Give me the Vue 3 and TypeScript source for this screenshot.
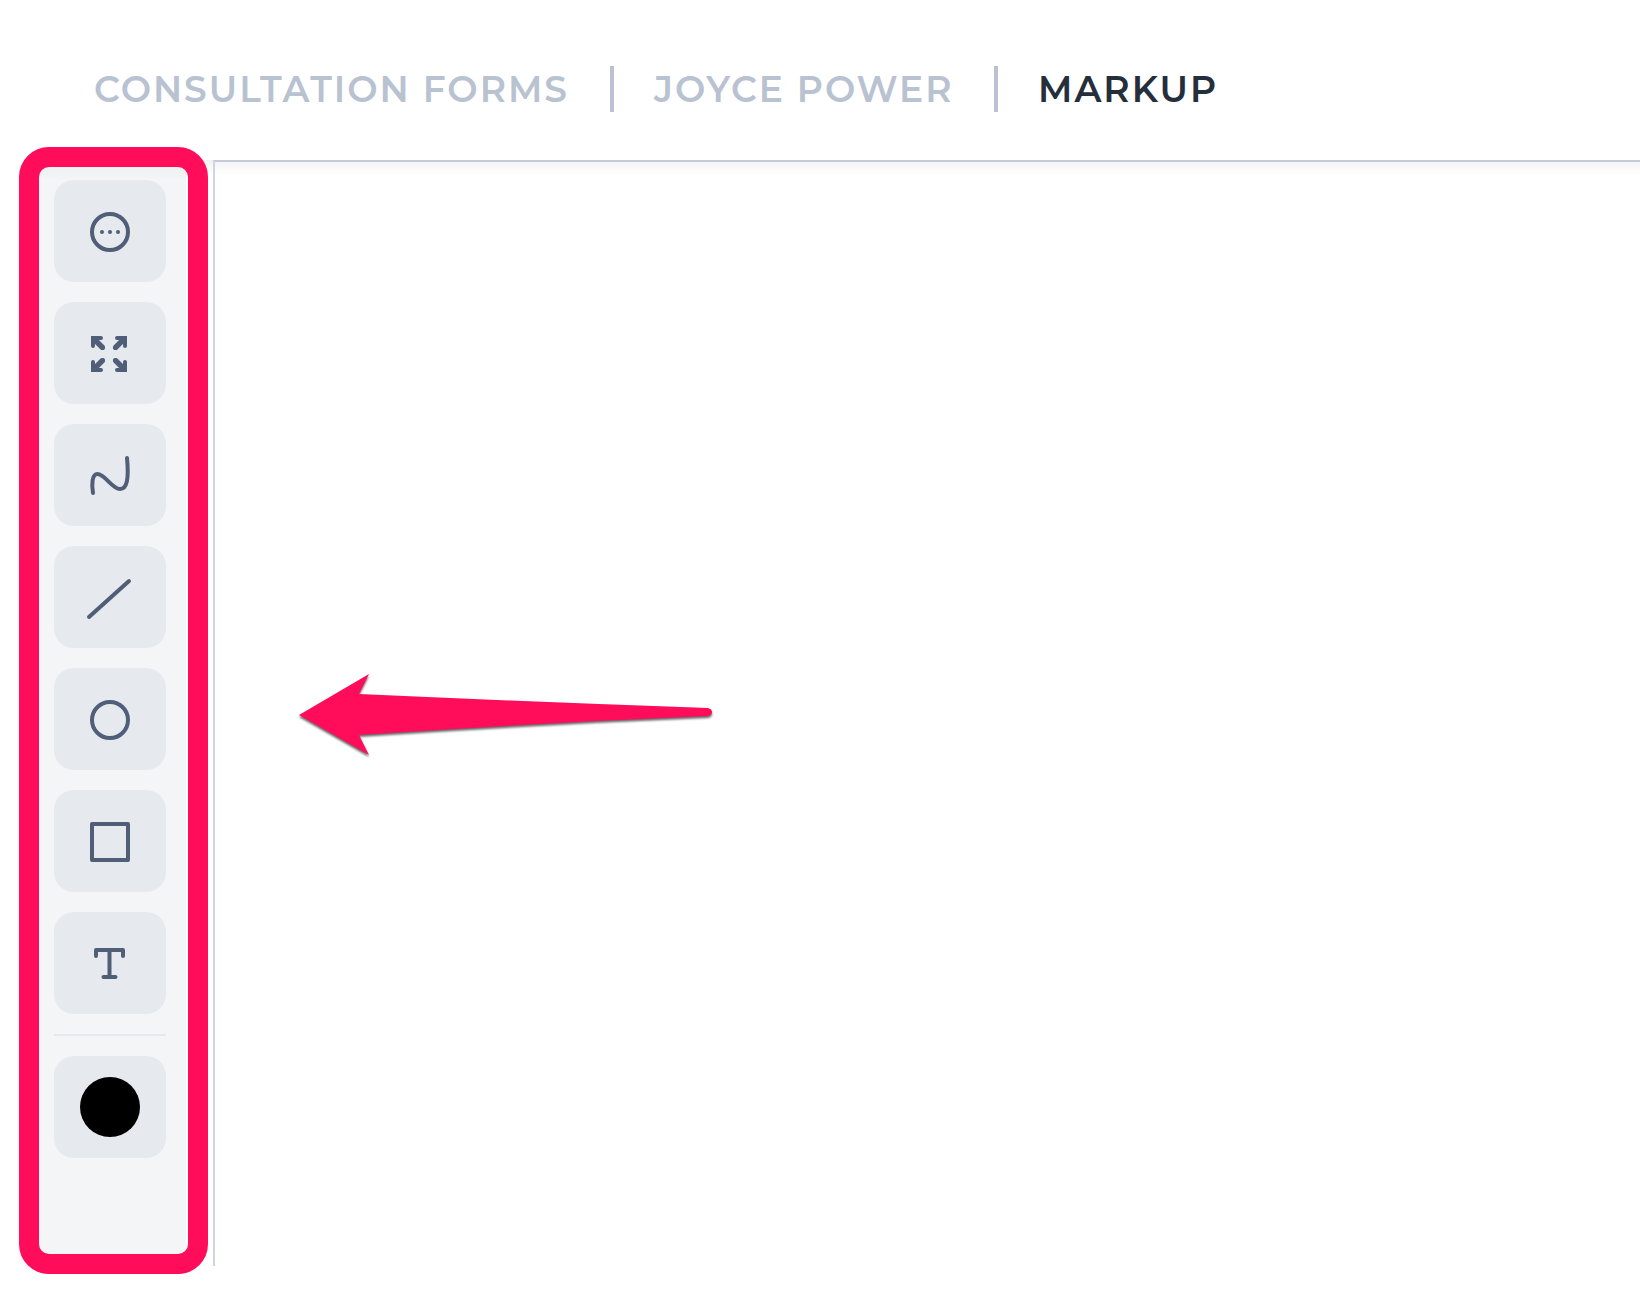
<script setup lang="ts">
import { ref } from 'vue'

interface Tool {
  id: string
  label: string
  strokes: string[]
}

const crumbs: string[] = ['CONSULTATION FORMS', 'JOYCE POWER']

const tools: Tool[] = [
  {
    id: 'more',
    label: 'More options',
    strokes: ['M42 25a18 18 0 1 1-36 0a18 18 0 1 1 36 0z', 'M16 25h0M24 25h0M32 25h0'],
  },
  {
    id: 'expand',
    label: 'Fit to screen',
    strokes: [
      'M15 9H7V17M31 9H39V17M15 41H7V33M31 41H39V33',
      'M8 10L17 19M38 10L29 19M8 40L17 31M38 40L29 31',
      'M9 10L17 18M8 11L16 19M37 10L29 18M38 11L30 19M9 40L17 32M8 39L16 31M37 40L29 32M38 39L30 31',
    ],
  },
  { id: 'draw', label: 'Freehand', strokes: ['M7 42C5.5 33 6 23 11.5 23C19 23 26 38 34 38C41 38 43 28 41 7'] },
  { id: 'line', label: 'Line', strokes: ['M3 44L43 8'] },
  { id: 'circle', label: 'Circle', strokes: ['M42 25a18 18 0 1 1-36 0a18 18 0 1 1 36 0z'] },
  { id: 'square', label: 'Rectangle', strokes: ['M6 7H42V43H6z'] },
  { id: 'text', label: 'Text', strokes: ['M10 17V11H37V17M23.5 11V38M17.5 38H29.5'] },
]

const active = ref<string>('')
</script>

<template>
  <div class="page">
    <nav class="crumbs" aria-label="Breadcrumb">
      <template v-for="crumb in crumbs" :key="crumb">
        <a href="#" class="crumb">{{ crumb }}</a>
        <span class="divider" aria-hidden="true"></span>
      </template>
      <span class="crumb current" aria-current="page">MARKUP</span>
    </nav>

    <main class="workspace">
      <aside class="sidebar">
        <div class="tools" role="toolbar" aria-label="Markup tools">
          <button
            v-for="tool in tools"
            :key="tool.id"
            type="button"
            class="tool"
            :aria-label="tool.label"
            :aria-pressed="active === tool.id"
            @click="active = tool.id"
          >
            <svg class="icon" :class="tool.id" viewBox="0 0 48 48" aria-hidden="true">
              <path v-for="d in tool.strokes" :key="d" :d="d" />
            </svg>
          </button>
          <hr class="rule" />
          <button type="button" class="tool" aria-label="Colour">
            <span class="swatch"></span>
          </button>
        </div>
        <div class="highlight"></div>
      </aside>

      <section class="canvas" aria-label="Canvas">
        <svg class="arrow" viewBox="0 0 424 92" aria-hidden="true">
          <path
            d="M3 45L73 4L63 24Q240 32 412 38Q416 39 416 42Q416 45 412 46Q240 53 63 65L73 85z"
          />
        </svg>
      </section>
    </main>
  </div>
</template>

<style>
body {
  margin: 0;
  background: #fff;
}
</style>

<style scoped>
.page {
  box-sizing: border-box;
  display: flex;
  flex-direction: column;
  min-height: 100vh;
  padding-bottom: 48px;
  font-family: Montserrat, Inter, 'Liberation Sans', sans-serif;
}

.crumbs {
  display: grid;
  grid-template-columns: 476px 4px 300px 4px auto;
  align-items: center;
  column-gap: 40px;
  padding: 66px 94px 48px;
}

.crumb {
  color: #b9c2d0;
  font-size: 36px;
  font-weight: 600;
  line-height: 46px;
  letter-spacing: 2px;
  text-decoration: none;
  white-space: nowrap;
}

.current {
  color: #252e3b;
}

.divider {
  height: 46px;
  background: #b9c2d0;
}

.workspace {
  display: flex;
  flex: 1;
}

.sidebar {
  position: relative;
  box-sizing: border-box;
  display: flex;
  width: 213px;
  padding: 0 0 0 29px;
}

.tools {
  flex: 1;
  display: flex;
  flex-direction: column;
  gap: 20px;
  padding: 20px 20px 0 25px;
  background: linear-gradient(#ecedef, #f3f5f7 20px);
}

.sidebar::after {
  content: '';
  width: 27px;
  background: linear-gradient(#f1f1f2, #fff 16px);
}

.tool {
  display: flex;
  align-items: center;
  justify-content: center;
  height: 102px;
  padding: 0;
  border: 0;
  border-radius: 20px;
  background: #e6e9ee;
  cursor: pointer;
}

.icon {
  width: 48px;
  height: 48px;
  fill: none;
  stroke: #505f77;
  stroke-width: 4;
  stroke-linecap: round;
  stroke-linejoin: round;
}

.icon.expand {
  stroke-linejoin: miter;
}

.rule {
  width: 100%;
  height: 2px;
  margin: 0;
  border: 0;
  background: #e6e9ee;
}

.swatch {
  width: 60px;
  height: 60px;
  border-radius: 50%;
  background: #000;
}

.highlight {
  position: absolute;
  inset: -13px 5px -8px 19px;
  border: 20px solid #ff0d5a;
  border-radius: 30px;
  pointer-events: none;
}

.canvas {
  position: relative;
  flex: 1;
  border-top: 2px solid #c7cad7;
  border-left: 2px solid #d0d4e0;
  background: linear-gradient(#f5f5f5, #fff 14px);
}

.arrow {
  position: absolute;
  top: 508px;
  left: 81px;
  width: 424px;
  height: 92px;
  fill: #ff0d5a;
  filter: drop-shadow(0 2px 1px rgba(0, 0, 0, 0.6));
}
</style>
